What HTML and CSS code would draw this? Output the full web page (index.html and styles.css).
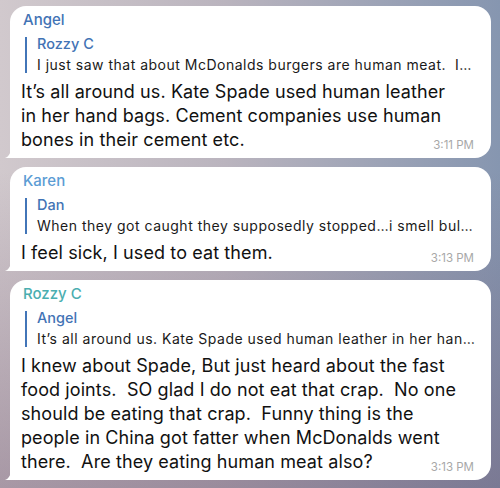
FILE: index.html
```html
<!DOCTYPE html>
<html>
<head>
<meta charset="utf-8">
<link rel="stylesheet" href="styles.css">
</head>
<body>
<div class="chat">
  <div class="msg">
    <div class="name name-angel">Angel</div>
    <div class="reply">
      <div class="reply-name">Rozzy C</div>
      <div class="reply-text">I just saw that about McDonalds burgers are human meat.&nbsp; I…</div>
    </div>
    <div class="text">It’s all around us. Kate Spade used human leather<br>in her hand bags. Cement companies use human<br>bones in their cement etc.</div>
    <span class="time">3:11 PM</span>
    <svg class="tail" width="16" height="16" viewBox="0 0 16 16"><path d="M7 0 L16 0 L16 16 L1 16 C4 15 6.5 12 7 7 Z" fill="#fff"/></svg>
  </div>
  <div class="msg">
    <div class="name name-karen">Karen</div>
    <div class="reply">
      <div class="reply-name">Dan</div>
      <div class="reply-text">When they got caught they supposedly stopped…i smell bul…</div>
    </div>
    <div class="text">I feel sick, I used to eat them.</div>
    <span class="time">3:13 PM</span>
    <svg class="tail" width="16" height="16" viewBox="0 0 16 16"><path d="M7 0 L16 0 L16 16 L1 16 C4 15 6.5 12 7 7 Z" fill="#fff"/></svg>
  </div>
  <div class="msg">
    <div class="name name-rozzy">Rozzy C</div>
    <div class="reply">
      <div class="reply-name">Angel</div>
      <div class="reply-text">It’s all around us. Kate Spade used human leather in her han…</div>
    </div>
    <div class="text">I knew about Spade, But just heard about the fast<br>food joints.&nbsp; SO glad I do not eat that crap.&nbsp; No one<br>should be eating that crap.&nbsp; Funny thing is the<br>people in China got fatter when McDonalds went<br>there.&nbsp; Are they eating human meat also?</div>
    <span class="time">3:13 PM</span>
    <svg class="tail" width="16" height="16" viewBox="0 0 16 16"><path d="M7 0 L16 0 L16 16 L1 16 C4 15 6.5 12 7 7 Z" fill="#fff"/></svg>
  </div>
</div>
</body>
</html>
```
FILE: styles.css
```css
html, body {
  margin: 0;
  height: 100%;
}
body {
  width: 500px;
  height: 488px;
  overflow: hidden;
  font-family: Inter, "Liberation Sans", Arial, sans-serif;
  background:
    linear-gradient(180deg, rgba(110, 80, 110, 0) 35%, rgba(105, 78, 105, 0.4) 100%),
    linear-gradient(90deg, #d1c9cd 0%, #bab4be 45%, #8696b0 100%);
}
.chat {
  display: flex;
  flex-direction: column;
  gap: 9px;
  padding: 6px 9px 0 10px;
}
.msg {
  position: relative;
  background: #fff;
  border-radius: 16px 16px 16px 4px;
  padding: 5px 12px 6px 11px;
}
.tail {
  position: absolute;
  left: -6px;
  bottom: 0;
}
.name {
  font-size: 15px;
  line-height: 18px;
  font-weight: 500;
  margin-left: 2px;
}
.name-angel { color: #4273b5; }
.name-karen { color: #5b9cd4; }
.name-rozzy { color: #4aaeb0; }
.reply {
  margin: 8px 0 7px 4px;
  border-left: 2.5px solid #4275b8;
  padding-left: 10px;
}
.reply-name {
  font-size: 14.5px;
  line-height: 14px;
  font-weight: 500;
  color: #4273b5;
}
.reply-text {
  margin-top: 6px;
  font-size: 14px;
  line-height: 16px;
  letter-spacing: 0.5px;
  color: #1a1a1a;
  white-space: nowrap;
}
.text {
  font-size: 18px;
  line-height: 24px;
  letter-spacing: 0.1px;
  color: #111;
  white-space: nowrap;
}
.time {
  position: absolute;
  right: 17px;
  bottom: 6px;
  font-size: 11.5px;
  color: #a8a8a8;
}
```
